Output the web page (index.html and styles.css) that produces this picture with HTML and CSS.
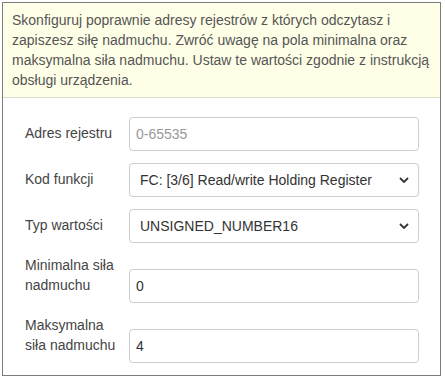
FILE: index.html
```html
<!DOCTYPE html>
<html lang="pl">
<head>
    <meta charset="UTF-8">
    <meta name="viewport" content="width=device-width, initial-scale=1.0">
    <title>Konfiguracja rejestrów</title>
    <link rel="stylesheet" href="styles.css">
</head>
<body>
    <div class="panel">
        <div class="hint">
            Skonfiguruj poprawnie adresy rejestrów z których odczytasz i zapiszesz siłę nadmuchu. Zwróć uwagę na pola minimalna oraz maksymalna siła nadmuchu. Ustaw te wartości zgodnie z instrukcją obsługi urządzenia.
        </div>
        <form class="form">
            <div class="row">
                <label class="label" for="addr">Adres rejestru</label>
                <input class="field" id="addr" type="text" placeholder="0-65535">
            </div>
            <div class="row">
                <label class="label" for="fc">Kod funkcji</label>
                <div class="select-wrap">
                    <select class="field select" id="fc">
                        <option>FC: [3/6] Read/write Holding Register</option>
                    </select>
                    <svg class="chevron" width="10" height="6" viewBox="0 0 10 6"><path d="M1 1l4 4 4-4" fill="none" stroke="#333" stroke-width="1.8"/></svg>
                </div>
            </div>
            <div class="row">
                <label class="label" for="typ">Typ wartości</label>
                <div class="select-wrap">
                    <select class="field select" id="typ">
                        <option>UNSIGNED_NUMBER16</option>
                    </select>
                    <svg class="chevron" width="10" height="6" viewBox="0 0 10 6"><path d="M1 1l4 4 4-4" fill="none" stroke="#333" stroke-width="1.8"/></svg>
                </div>
            </div>
            <div class="row">
                <label class="label" for="min">Minimalna siła nadmuchu</label>
                <input class="field" id="min" type="text" value="0">
            </div>
            <div class="row">
                <label class="label" for="max">Maksymalna siła nadmuchu</label>
                <input class="field" id="max" type="text" value="4">
            </div>
        </form>
    </div>
</body>
</html>
```

FILE: styles.css
```css
body {
    margin: 2px;
    font-family: 'Liberation Sans', Arial, sans-serif;
    font-size: 14px;
    line-height: 20px;
    color: #444;
    background-color: #ffffff;
}
.panel {
    width: 439px;
    border: 1px solid #7d7d7d;
    box-sizing: border-box;
}
.hint {
    background-color: #ffffe8;
    border-bottom: 1px solid #dcdcd0;
    padding: 7px 10px 7px 9px;
    color: #555;
}
.form {
    display: flex;
    flex-direction: column;
    gap: 12px;
    padding: 19px 21px 12px 22px;
}
.row {
    display: grid;
    grid-template-columns: 96px 1fr;
    column-gap: 8px;
    align-items: end;
}
.label {
    padding-bottom: 8px;
    color: #444;
}
.field {
    box-sizing: border-box;
    width: 100%;
    height: 34px;
    margin: 0;
    padding: 0 6px;
    border: 1px solid #cccccc;
    border-radius: 4px;
    background-color: #ffffff;
    font-family: 'Liberation Sans', Arial, sans-serif;
    font-size: 14px;
    color: #333;
    outline: none;
}
.field::placeholder {
    color: #999;
}
.select-wrap {
    position: relative;
}
.select {
    appearance: none;
    -webkit-appearance: none;
    padding: 0 28px 0 10px;
}
.chevron {
    position: absolute;
    right: 10px;
    top: 14px;
    pointer-events: none;
}
```
